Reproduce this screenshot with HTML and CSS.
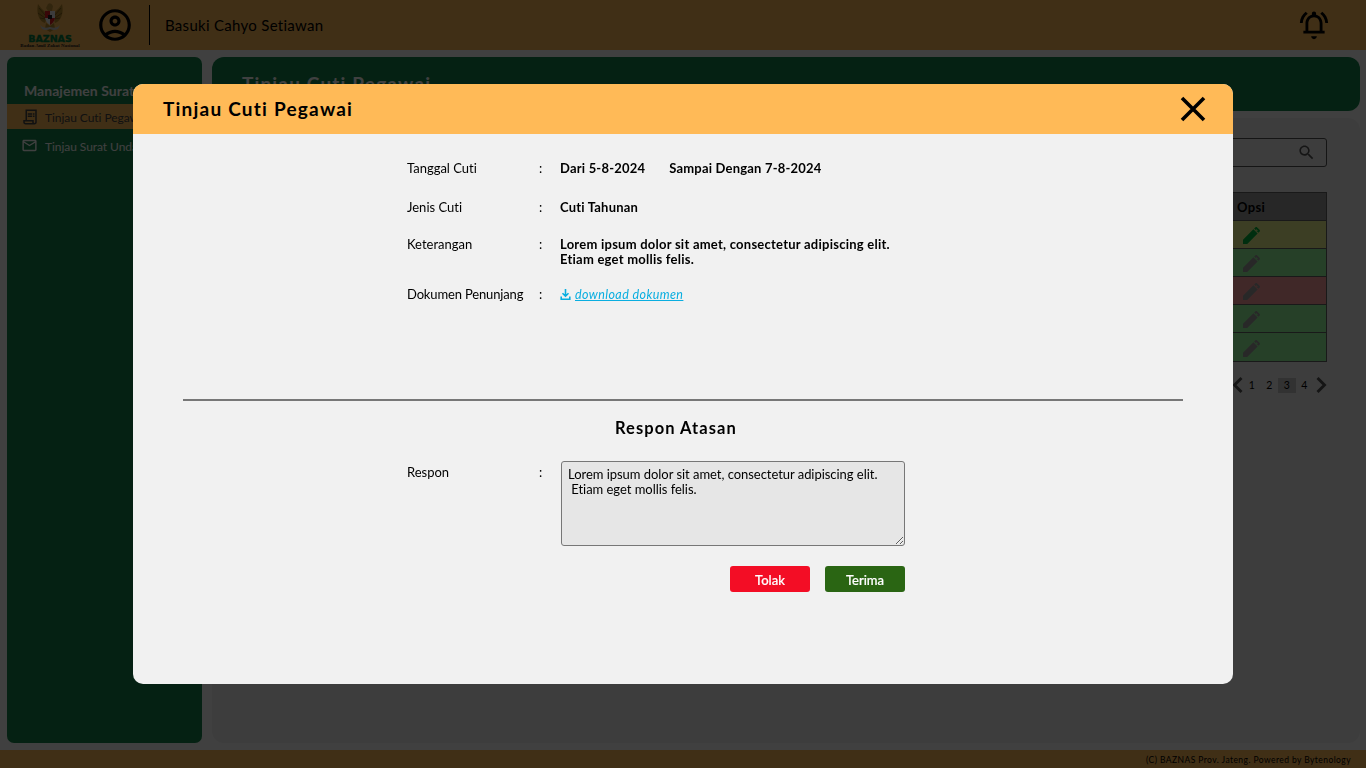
FILE: index.html
```html
<!DOCTYPE html>
<html lang="id">
<head>
<meta charset="utf-8">
<title>Tinjau Cuti Pegawai</title>
<link rel="stylesheet" href="styles.css">
</head>
<body>
<div class="app">
  <header class="topbar">
    <div class="logo">
      <svg class="garuda" viewBox="0 0 26 29">
        <path d="M1 1C-1 10 2 18 8 20L10 14 8 9 4 5ZM25 1C27 10 24 18 18 20L16 14 18 9 22 5Z" fill="#b98a2c"/>
        <path d="M2 5l6 7M1 10l7 5M3 15l6 1M24 5l-6 7M25 10l-7 5M23 15l-6 1" stroke="#765516" stroke-width=".8"/>
        <path d="M11 1q3-2 5 2l-1 5h-4l-2-3Z" fill="#c3953a"/>
        <path d="M8 8h10v7q-1 5-5 7-4-2-5-7Z" fill="#eee"/>
        <path d="M8 8h5v7H8zM13 15h5q-1 5-5 7Z" fill="#e01c22"/>
        <path d="M11 12h4v4h-4z" fill="#222"/>
        <path d="M9 20l4 3 4-3 1 6-5 3-5-3Z" fill="#b98a2c"/>
        <path d="M3 22q3 4 10 2 7 2 10-2l-2 4q-4 2-8 0-4 2-8 0Z" fill="#ccc"/>
      </svg>
      <span class="logo-name">BAZNAS</span>
      <span class="logo-sub">Badan Amil Zakat Nasional</span>
    </div>
    <svg class="avatar" viewBox="0 0 24 24"><path d="M12 2C6.48 2 2 6.48 2 12s4.480 10 10 10 10-4.480 10-10S17.520 2 12 2zM7.350 18.500C8.660 17.560 10.260 17 12 17s3.340.56 4.650 1.500C15.340 19.440 13.740 20 12 20s-3.340-.56-4.650-1.500zm10.790-1.380C16.450 15.800 14.320 15 12 15s-4.450.8-6.140 2.120C4.700 15.730 4 13.950 4 12c0-4.420 3.580-8 8-8s8 3.580 8 8c0 1.950-.7 3.730-1.860 5.120z"/><path d="M12 6c-1.930 0-3.500 1.570-3.500 3.500S10.070 13 12 13s3.500-1.570 3.500-3.500S13.930 6 12 6zm0 5c-.83 0-1.500-.67-1.500-1.500S11.170 8 12 8s1.500.67 1.500 1.500S12.830 11 12 11z"/></svg>
    <span class="user">Basuki Cahyo Setiawan</span>
    <svg class="bell" viewBox="0 0 24 24"><path d="M12 22c1.100 0 2-.9 2-2h-4c0 1.100.9 2 2 2zm6-6v-5c0-3.070-1.630-5.640-4.500-6.320V4c0-.83-.67-1.500-1.500-1.500s-1.500.67-1.500 1.500v.68C7.640 5.360 6 7.920 6 11v5H4.500v2h15v-2H18zm-2 0H8v-5c0-2.480 1.510-4.500 4-4.500s4 2.020 4 4.500v5zM7.580 4.080L6.150 2.650C3.750 4.480 2.170 7.300 2.030 10.500h2c.15-2.650 1.510-4.970 3.550-6.420zm12.390 6.420h2c-.15-3.200-1.730-6.020-4.120-7.850l-1.420 1.430c2.020 1.450 3.390 3.770 3.540 6.420z"/></svg>
  </header>

  <div class="body">
    <nav class="sidebar">
      <h2 class="nav-title">Manajemen Surat</h2>
      <a class="nav-item active"><svg class="nav-icon" viewBox="0 0 24 24"><path d="M6 2h15v17c0 1.660-1.340 3-3 3H6c-1.660 0-3-1.340-3-3v-3h3zM15 20v-2H5v1c0 .55.45 1 1 1zm4-1V4H8v12h9v3c0 .55.45 1 1 1s1-.45 1-1z" fill-rule="evenodd"/><path d="M9 7h6v2H9zM16 7h2v2h-2zM9 10h6v2H9zM16 10h2v2h-2z"/></svg><span>Tinjau Cuti Pegawai</span></a>
      <a class="nav-item"><svg class="nav-icon" viewBox="0 0 24 24"><path d="M22 6c0-1.100-.9-2-2-2H4c-1.100 0-2 .9-2 2v12c0 1.100.9 2 2 2h16c1.100 0 2-.9 2-2V6zm-2 0l-8 5-8-5h16zm0 12H4V8l8 5 8-5v10z"/></svg><span>Tinjau Surat Undangan</span></a>
    </nav>
    <main class="main">
      <div class="page-title">Tinjau Cuti Pegawai</div>
      <section class="panel">
        <div class="search"><svg class="search-icon" viewBox="0 0 24 24"><path d="M15.500 14h-.79l-.28-.27C15.410 12.590 16 11.110 16 9.500 16 5.910 13.090 3 9.500 3S3 5.910 3 9.500 5.910 16 9.500 16c1.610 0 3.090-.59 4.230-1.570l.27.28v.79l5 4.990L20.490 19l-4.990-5zm-6 0C7.010 14 5 11.990 5 9.500S7.010 5 9.500 5 14 7.010 14 9.500 11.990 14 9.500 14z"/></svg></div>
        <div class="table">
          <div class="row head">Opsi</div>
          <div class="row wait"><svg class="pen" viewBox="0 0 18 18"><path d="M0 13.500V18h4.500L15.500 7 11 2.500zM17.500 5c.6-.6.600-1.400 0-2L15 .5c-.6-.6-1.400-.6-2 0L11.800 1.700l4.500 4.500zM14.300 2.400l1.300 1.300-1 1-1.300-1.300z" fill-rule="evenodd"/></svg></div>
          <div class="row ok"><svg class="pen" viewBox="0 0 18 18"><path d="M0 13.500V18h4.500L15.500 7 11 2.500zM17.500 5c.6-.6.600-1.400 0-2L15 .5c-.6-.6-1.400-.6-2 0L11.800 1.700l4.500 4.500zM14.300 2.400l1.300 1.300-1 1-1.300-1.300z" fill-rule="evenodd"/></svg></div>
          <div class="row no"><svg class="pen" viewBox="0 0 18 18"><path d="M0 13.500V18h4.500L15.500 7 11 2.500zM17.500 5c.6-.6.600-1.400 0-2L15 .5c-.6-.6-1.400-.6-2 0L11.800 1.700l4.500 4.500zM14.300 2.400l1.300 1.300-1 1-1.300-1.300z" fill-rule="evenodd"/></svg></div>
          <div class="row ok"><svg class="pen" viewBox="0 0 18 18"><path d="M0 13.500V18h4.500L15.500 7 11 2.500zM17.500 5c.6-.6.600-1.400 0-2L15 .5c-.6-.6-1.400-.6-2 0L11.800 1.700l4.500 4.500zM14.300 2.400l1.300 1.300-1 1-1.300-1.300z" fill-rule="evenodd"/></svg></div>
          <div class="row ok"><svg class="pen" viewBox="0 0 18 18"><path d="M0 13.500V18h4.500L15.500 7 11 2.500zM17.500 5c.6-.6.600-1.400 0-2L15 .5c-.6-.6-1.400-.6-2 0L11.800 1.700l4.500 4.500zM14.300 2.400l1.300 1.300-1 1-1.300-1.300z" fill-rule="evenodd"/></svg></div>
        </div>
        <div class="pager">
          <svg class="chev" viewBox="0 0 10 16"><path d="M9 1L2 8l7 7"/></svg>
          <span class="pg">1</span><span class="pg">2</span><span class="pg current">3</span><span class="pg">4</span>
          <svg class="chev next" viewBox="0 0 10 16"><path d="M1 1l7 7-7 7"/></svg>
        </div>
      </section>
    </main>
  </div>
  <footer class="footer"><span>(C) BAZNAS Prov. Jateng. Powered by Bytenology</span></footer>
</div>

<div class="overlay">
  <div class="modal">
    <div class="modal-head">
      <h1 class="modal-title">Tinjau Cuti Pegawai</h1>
      <svg class="close" viewBox="0 0 26 26"><path d="M2 2l22 22M24 2L2 24"/></svg>
    </div>
    <div class="details">
      <div class="field date"><span class="label">Tanggal Cuti</span><span>:</span><div class="value"><span>Dari 5-8-2024</span><span>Sampai Dengan 7-8-2024</span></div></div>
      <div class="field kind"><span class="label">Jenis Cuti</span><span>:</span><div class="value">Cuti Tahunan</div></div>
      <div class="field note"><span class="label">Keterangan</span><span>:</span><div class="value v-note">Lorem ipsum dolor sit amet, consectetur adipiscing elit.<br>Etiam eget mollis felis.</div></div>
      <div class="field"><span class="label l-doc">Dokumen Penunjang</span><span>:</span><a class="download"><svg class="dl-icon" viewBox="0 0 10 11"><path d="M5 0v7M2 4.200l3 3 3-3M.7 7.500v2.700h8.600V7.500"/></svg><span class="dl-text">download dokumen</span></a></div>
    </div>
    <div class="divider"></div>
    <h2 class="response-title">Respon Atasan</h2>
    <div class="response">
      <div class="field reply"><span class="label">Respon</span><span>:</span>
        <textarea class="answer" readonly>Lorem ipsum dolor sit amet, consectetur adipiscing elit.
 Etiam eget mollis felis.</textarea>
      </div>
      <div class="actions"><button class="btn reject">Tolak</button><button class="btn accept">Terima</button></div>
    </div>
  </div>
</div>
</body>
</html>
```

FILE: styles.css
```css
* { box-sizing: border-box; }
body { margin: 0; font-family: Lato, "Open Sans", sans-serif; font-size: 13px; font-variant-ligatures: none; color: #000; overflow: hidden; }
h1, h2 { margin: 0; }
svg { display: block; flex: none; }
.app { width: 1366px; height: 768px; display: flex; flex-direction: column; background: #fff; }

.topbar { height: 50px; flex: none; display: flex; align-items: center; background: #ffba57; padding-left: 20px; }
.logo { width: 60px; height: 50px; padding-top: 3px; display: flex; flex-direction: column; align-items: center; }
.garuda { width: 26px; height: 29px; }
.logo-name { font: bold 9.5px/9px "DejaVu Sans", sans-serif; color: #007b42; margin-top: 2px; -webkit-text-stroke: .4px #007b42; }
.logo-sub { font: bold 5px/5px "Liberation Serif", serif; white-space: nowrap; color: #222; }
.avatar { width: 38px; height: 38px; margin-left: 16px; }
.user { margin-left: 15px; height: 40px; line-height: 41px; border-left: 1px solid #000; padding-left: 15px; font-size: 15px; letter-spacing: .29px; }
.bell { width: 34px; height: 34px; margin-left: auto; margin-right: 35px; }

.body { flex: 1; min-height: 0; display: flex; gap: 10px; padding: 7px 6px 7px 7px; }
.sidebar { width: 195px; flex: none; background: #14844c; border-radius: 7px; color: #fff; padding-top: 24px; }
.nav-title { font-size: 14px; line-height: 20px; height: 23px; padding-left: 17px; letter-spacing: .05px; }
.nav-item { display: flex; align-items: center; gap: 5px; height: 25px; padding-left: 15px; font-size: 12px; letter-spacing: -.06px; white-space: nowrap; margin-bottom: 4px; }
.nav-item span { padding-top: 2px; }
.nav-item.active { background: #ffba57; color: #444; }
.nav-icon { width: 17px; height: 17px; margin-left: -1px; fill: currentColor; }
.nav-item span { margin-left: 2px; }
.active .nav-icon { width: 18px; height: 18px; margin-right: -1px; }

.main { flex: 1; display: flex; flex-direction: column; gap: 7px; }
.page-title { height: 54px; flex: none; background: #14844c; border-radius: 12px; color: #fff; font-weight: bold; font-size: 19px; line-height: 54px; padding-left: 30px; letter-spacing: 1.170px; }
.panel { flex: 1; background: #f3f3f3; border-radius: 12px; padding: 20px 33px; display: flex; flex-direction: column; align-items: flex-end; }
.search { width: 240px; height: 29px; border: 1px solid #555; border-radius: 3px; display: flex; align-items: center; justify-content: flex-end; padding-right: 10px; }
.search-icon { width: 19px; height: 19px; fill: #555; }
.table { width: 1080px; margin-top: 25px; border: 1px solid #666; }
.row { height: 28px; border-bottom: 1px solid #666; padding-left: 989px; display: flex; align-items: center; }
.row:last-child { border-bottom: 0; }
.row.head { background: #9c9c9c; font-weight: bold; font-size: 13px; letter-spacing: .3px; }
.row.wait { background: #f0f890; }
.row.ok { background: #98ffa0; }
.row.no { background: #ffa0a0; }
.pen { width: 17px; height: 17px; margin: 2px 0 0 6px; fill: #a0a0a0; }
.wait .pen { fill: #00b83c; }
.pager { display: flex; align-items: center; margin-top: 15px; font-size: 10.500px; }
.chev { width: 11px; height: 16px; fill: none; stroke: #555; stroke-width: 2.900; }
.chev.next { margin-left: 3px; }
.pg { width: 17.500px; height: 15px; line-height: 15px; text-align: center; }
.current { background: #c8c8c8; }

.footer { height: 18px; flex: none; background: #ffba57; text-align: right; padding-right: 15px; font-size: 8.500px; line-height: 20px; letter-spacing: .43px; }

.overlay { position: fixed; inset: 0; background: rgba(0, 0, 0, .75); display: flex; align-items: center; justify-content: center; }
.modal { width: 1100px; height: 600px; background: #f1f1f1; border-radius: 10px; overflow: hidden; }
.modal-head { height: 50px; background: #ffba57; display: flex; align-items: center; justify-content: space-between; padding: 0 27px 0 30px; }
.modal-title { font-size: 19px; line-height: 22px; padding-bottom: 1px; letter-spacing: 1.220px; }
.close { width: 26px; height: 26px; stroke: #000; stroke-width: 3.600; }
.details { padding: 27px 0 0 274px; height: 264px; }
.field { display: grid; grid-template-columns: 132px 21px 1fr; line-height: 15px; }
.l-doc { letter-spacing: -.15px; }
.date { height: 39px; }
.kind { height: 37px; }
.note { height: 50px; }
.value { font-weight: bold; display: flex; gap: 24px; letter-spacing: .2px; }
.v-note { display: block; letter-spacing: .24px; }
.download { display: flex; align-items: center; gap: 4px; color: #0aaee0; }
.dl-icon { width: 11px; height: 11px; fill: none; stroke: currentColor; stroke-width: 1.600; }
.dl-text { font-style: italic; text-decoration: underline; font-size: 12.500px; letter-spacing: .4px; }
.divider { width: 1000px; height: 2px; margin: 1px 50px 0; background: #777; }
.response-title { font-size: 16.500px; line-height: 22px; letter-spacing: 1.050px; margin: 16px 0 0 482px; }
.response { width: 772px; padding: 22px 0 0 274px; }
.reply { grid-template-columns: 132px 22px 1fr; }
.reply > span { padding-top: 4px; }
.answer { width: 344px; height: 85px; border: 1px solid #777; border-radius: 3px; background: #e6e6e6; padding: 5px 6px; font: 13px/15px Lato, sans-serif; font-variant-ligatures: none; letter-spacing: -.04px; resize: both; overflow: hidden; color: #000; margin: 0; outline: 0; }
.actions { display: flex; justify-content: flex-end; gap: 15px; margin-top: 20px; }
.btn { width: 80px; height: 26px; border: 0; border-radius: 3px; color: #fff; font: 500 13px Lato, sans-serif; padding: 1px 0 0; -webkit-text-stroke: .2px #fff; }
.reject { background: #f30d25; }
.accept { background: #2a6513; }
```
